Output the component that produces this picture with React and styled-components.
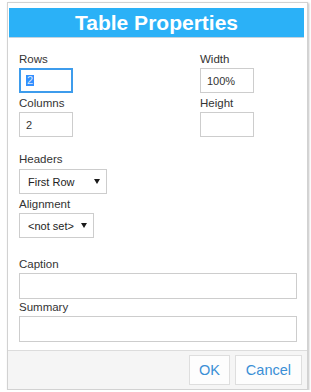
import React from 'react';
import styled, { createGlobalStyle } from 'styled-components';

const GlobalStyle = createGlobalStyle`
  html, body {
    margin: 0;
    padding: 0;
    background: #fff;
  }
  body {
    font-family: 'Liberation Sans', Arial, sans-serif;
    color: #333;
  }
`;

const Dialog = styled.div`
  margin: 2px 0 0 7px;
  width: 301px;
  height: 388px;
  box-sizing: border-box;
  border: 1px solid #d2d2d2;
  box-shadow: 1px 1px 2px rgba(0, 0, 0, 0.25);
  background: #fff;
  display: flex;
  flex-direction: column;
`;

const TitleBar = styled.div`
  margin: 5px 3px 0 1px;
  height: 29px;
  border-bottom: 1px solid #c3d3de;
  background: #2bb1f7;
  color: #fff;
  font-size: 21px;
  font-weight: bold;
  line-height: 30px;
  text-align: center;
`;

const Body = styled.div`
  flex: 1;
  padding: 15px 10px 0 11px;
  display: flex;
  flex-direction: column;
`;

const Columns = styled.div`
  display: grid;
  grid-template-columns: 181px 1fr;
`;

const Group = styled.div`
  display: flex;
  flex-direction: column;
  margin-top: ${(p) => p.$top || 0}px;
`;

const Label = styled.div`
  font-size: 11.5px;
  line-height: 13px;
  color: #333;
  margin-bottom: ${(p) => p.$gap || 2}px;
`;

const Field = styled.div`
  box-sizing: border-box;
  width: ${(p) => p.$width || '100%'};
  height: ${(p) => p.$height || 25}px;
  border: ${(p) => (p.$focused ? '2px solid #3d9cec' : '1px solid #cdcdcd')};
  padding-left: ${(p) => (p.$focused ? 5 : 6)}px;
  display: flex;
  align-items: center;
  font-size: 11px;
  color: #333;
  background: #fff;
`;

const Selected = styled.span`
  background: #3390ff;
  color: #dfe9f5;
  line-height: 11px;
  padding: 0 1px;
`;

const Select = styled.div`
  box-sizing: border-box;
  width: ${(p) => p.$width}px;
  height: 25px;
  border: 1px solid #cdcdcd;
  padding: 0 6px 0 8px;
  display: flex;
  align-items: center;
  justify-content: space-between;
  font-size: 11px;
  color: #222;
  background: #fff;
`;

const Caret = styled.span`
  width: 0;
  height: 0;
  border-left: 3.5px solid transparent;
  border-right: 3.5px solid transparent;
  border-top: 5px solid #1a1a1a;
`;

const Footer = styled.div`
  border-top: 1px solid #dcdcdc;
  background: #f5f5f5;
  padding: 4px 5px 4px;
  display: flex;
  justify-content: flex-end;
  gap: 5px;
`;

const Button = styled.button`
  height: 30px;
  padding: 0 ${(p) => p.$pad || 10}px;
  border: 1px solid #dedede;
  background: #fdfdfd;
  color: #3b8fd6;
  font-family: 'Liberation Sans', Arial, sans-serif;
  font-size: 14.5px;
  cursor: pointer;
`;

export default function App() {
  return (
    <>
      <GlobalStyle />
      <Dialog>
        <TitleBar>Table Properties</TitleBar>
        <Body>
          <Columns>
            <div>
              <Group>
                <Label>Rows</Label>
                <Field $width="54px" $focused>
                  <Selected>2</Selected>
                </Field>
              </Group>
              <Group $top={4}>
                <Label>Columns</Label>
                <Field $width="54px">2</Field>
              </Group>
            </div>
            <div>
              <Group>
                <Label>Width</Label>
                <Field $width="54px">100%</Field>
              </Group>
              <Group $top={4}>
                <Label>Height</Label>
                <Field $width="54px" />
              </Group>
            </div>
          </Columns>
          <Group $top={16}>
            <Label $gap={3}>Headers</Label>
            <Select $width={88}>
              First Row
              <Caret />
            </Select>
          </Group>
          <Group $top={4}>
            <Label $gap={2}>Alignment</Label>
            <Select $width={75}>
              &lt;not set&gt;
              <Caret />
            </Select>
          </Group>
          <Group $top={20}>
            <Label>Caption</Label>
            <Field $height={26} />
          </Group>
          <Group $top={2}>
            <Label>Summary</Label>
            <Field $height={26} />
          </Group>
        </Body>
        <Footer>
          <Button $pad={9}>OK</Button>
          <Button $pad={10}>Cancel</Button>
        </Footer>
      </Dialog>
    </>
  );
}
